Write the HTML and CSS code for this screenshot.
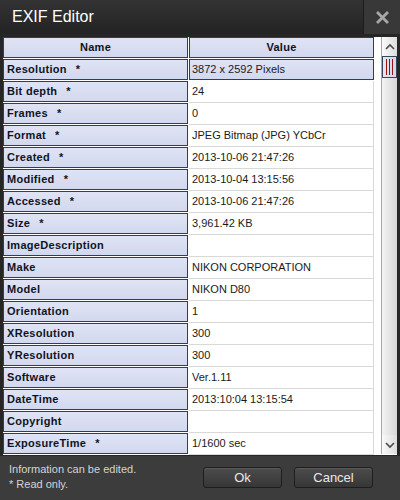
FILE: index.html
```html
<!DOCTYPE html>
<html>
<head>
<meta charset="utf-8">
<link rel="stylesheet" href="styles.css">
</head>
<body>
<div class="window">
  <div class="titlebar">
    <div class="title">EXIF Editor</div>
    <div class="close">
      <svg width="13" height="13" viewBox="0 0 13 13"><path d="M2 2 L11 11 M11 2 L2 11" stroke="#a8a8a8" stroke-width="2.8" stroke-linecap="square"/></svg>
    </div>
  </div>
  <div class="content">
    <div class="table">
      <div class="row head"><div class="name">Name</div><div class="val sel">Value</div></div>
      <div class="row"><div class="name">Resolution<span class="ro">*</span></div><div class="val sel">3872 x 2592 Pixels</div></div>
      <div class="row"><div class="name">Bit depth<span class="ro">*</span></div><div class="val">24</div></div>
      <div class="row"><div class="name">Frames<span class="ro">*</span></div><div class="val">0</div></div>
      <div class="row"><div class="name">Format<span class="ro">*</span></div><div class="val">JPEG Bitmap (JPG) YCbCr</div></div>
      <div class="row"><div class="name">Created<span class="ro">*</span></div><div class="val">2013-10-06 21:47:26</div></div>
      <div class="row"><div class="name">Modified<span class="ro">*</span></div><div class="val">2013-10-04 13:15:56</div></div>
      <div class="row"><div class="name">Accessed<span class="ro">*</span></div><div class="val">2013-10-06 21:47:26</div></div>
      <div class="row"><div class="name">Size<span class="ro">*</span></div><div class="val">3,961.42 KB</div></div>
      <div class="row"><div class="name">ImageDescription</div><div class="val"></div></div>
      <div class="row"><div class="name">Make</div><div class="val">NIKON CORPORATION</div></div>
      <div class="row"><div class="name">Model</div><div class="val">NIKON D80</div></div>
      <div class="row"><div class="name">Orientation</div><div class="val">1</div></div>
      <div class="row"><div class="name">XResolution</div><div class="val">300</div></div>
      <div class="row"><div class="name">YResolution</div><div class="val">300</div></div>
      <div class="row"><div class="name">Software</div><div class="val">Ver.1.11</div></div>
      <div class="row"><div class="name">DateTime</div><div class="val">2013:10:04 13:15:54</div></div>
      <div class="row"><div class="name">Copyright</div><div class="val"></div></div>
      <div class="row"><div class="name">ExposureTime<span class="ro">*</span></div><div class="val">1/1600 sec</div></div>
    </div>
    <div class="scrollbar">
      <div class="sbtn">
        <svg width="12" height="8" viewBox="0 0 12 8"><path d="M2 6 L6 2 L10 6" fill="none" stroke="#4a4a4a" stroke-width="1.6"/></svg>
      </div>
      <div class="thumb"><span></span><span></span><span></span></div>
      <div class="track"></div>
      <div class="sbtn">
        <svg width="12" height="8" viewBox="0 0 12 8"><path d="M2 2 L6 6 L10 2" fill="none" stroke="#4a4a4a" stroke-width="1.6"/></svg>
      </div>
    </div>
  </div>
  <div class="footer">
    <div class="notes">
      <div>Information can be edited.</div>
      <div>* Read only.</div>
    </div>
    <div class="buttons">
      <button class="btn ok">Ok</button>
      <button class="btn cancel">Cancel</button>
    </div>
  </div>
</div>
</body>
</html>
```

FILE: styles.css
```css
html, body {
  margin: 0;
  padding: 0;
  background: #2a2a2a;
}
body {
  width: 400px;
  height: 500px;
  overflow: hidden;
  font-family: "Liberation Sans", Arial, sans-serif;
}
.window {
  width: 400px;
  height: 500px;
  display: flex;
  flex-direction: column;
  background: #262626;
}
.titlebar {
  height: 34px;
  display: flex;
  align-items: stretch;
  background: linear-gradient(#333333, #232323);
}
.title {
  flex: 1;
  color: #ffffff;
  font-size: 16px;
  line-height: 34px;
  padding-left: 12px;
}
.close {
  width: 36px;
  display: flex;
  align-items: center;
  justify-content: center;
  background: #383838;
  border-left: 1px solid #1c1c1c;
}
.content {
  height: 418px;
  margin: 3px 3px 0 3px;
  background: #ffffff;
  display: flex;
  overflow: hidden;
}
.table {
  width: 371px;
}
.row {
  display: grid;
  grid-template-columns: 185px 185px;
  column-gap: 1px;
  height: 22px;
}
.name {
  box-sizing: border-box;
  height: 21px;
  border: 1px solid #2c405c;
  background: linear-gradient(#dfe3f4, #d2d8ee);
  font-weight: bold;
  font-size: 11px;
  letter-spacing: 0.3px;
  color: #0e1424;
  line-height: 19px;
  padding-left: 3px;
  white-space: nowrap;
}
.ro {
  margin-left: 9px;
}
.val {
  box-sizing: border-box;
  height: 22px;
  border-bottom: 1px solid #d9d9d9;
  border-right: 1px solid #d9d9d9;
  font-size: 11px;
  color: #1a1a1a;
  line-height: 20px;
  padding-left: 3px;
  white-space: nowrap;
}
.val.sel {
  height: 21px;
  border: 1px solid #2c405c;
  background: linear-gradient(#dfe3f4, #d2d8ee);
  line-height: 19px;
  padding-left: 2px;
}
.head .name, .head .val {
  text-align: center;
  padding-left: 0;
  font-weight: bold;
  letter-spacing: 0.3px;
  color: #0e1424;
}
.scrollbar {
  width: 16px;
  margin-left: 7px;
  display: flex;
  flex-direction: column;
  background: linear-gradient(to right, #f4f4f4, #d6d6d6);
  border-left: 1px solid #a8a8a8;
  height: 417px;
}
.sbtn {
  height: 19px;
  display: flex;
  align-items: center;
  justify-content: center;
  background: linear-gradient(to right, #fafafa, #dcdcdc);
}
.thumb {
  box-sizing: border-box;
  height: 22px;
  border: 1px solid #34475f;
  background: linear-gradient(to right, #e4e8f4, #cfd6ea);
  display: flex;
  justify-content: center;
  align-items: center;
  gap: 2px;
}
.thumb span {
  width: 1px;
  height: 16px;
  background: #9a1010;
}
.track {
  flex: 1;
}
.footer {
  flex: 1;
  background: #3c3c3c;
  display: flex;
  justify-content: space-between;
  align-items: flex-start;
  border-top: 1px solid #262626;
}
.notes {
  padding: 6px 0 0 9px;
  color: #d4d4d4;
  font-size: 11px;
  line-height: 15px;
}
.buttons {
  display: flex;
  gap: 12px;
  padding: 11px 27px 0 0;
}
.btn {
  box-sizing: border-box;
  width: 79px;
  height: 21px;
  border: 1px solid #1e1e1e;
  border-radius: 3px;
  background: linear-gradient(#4c4c4c, #363636);
  box-shadow: inset 0 1px 0 #5a5a5a;
  color: #e8e8e8;
  font-family: "Liberation Sans", Arial, sans-serif;
  font-size: 13px;
  padding: 0;
  line-height: 19px;
}
```
